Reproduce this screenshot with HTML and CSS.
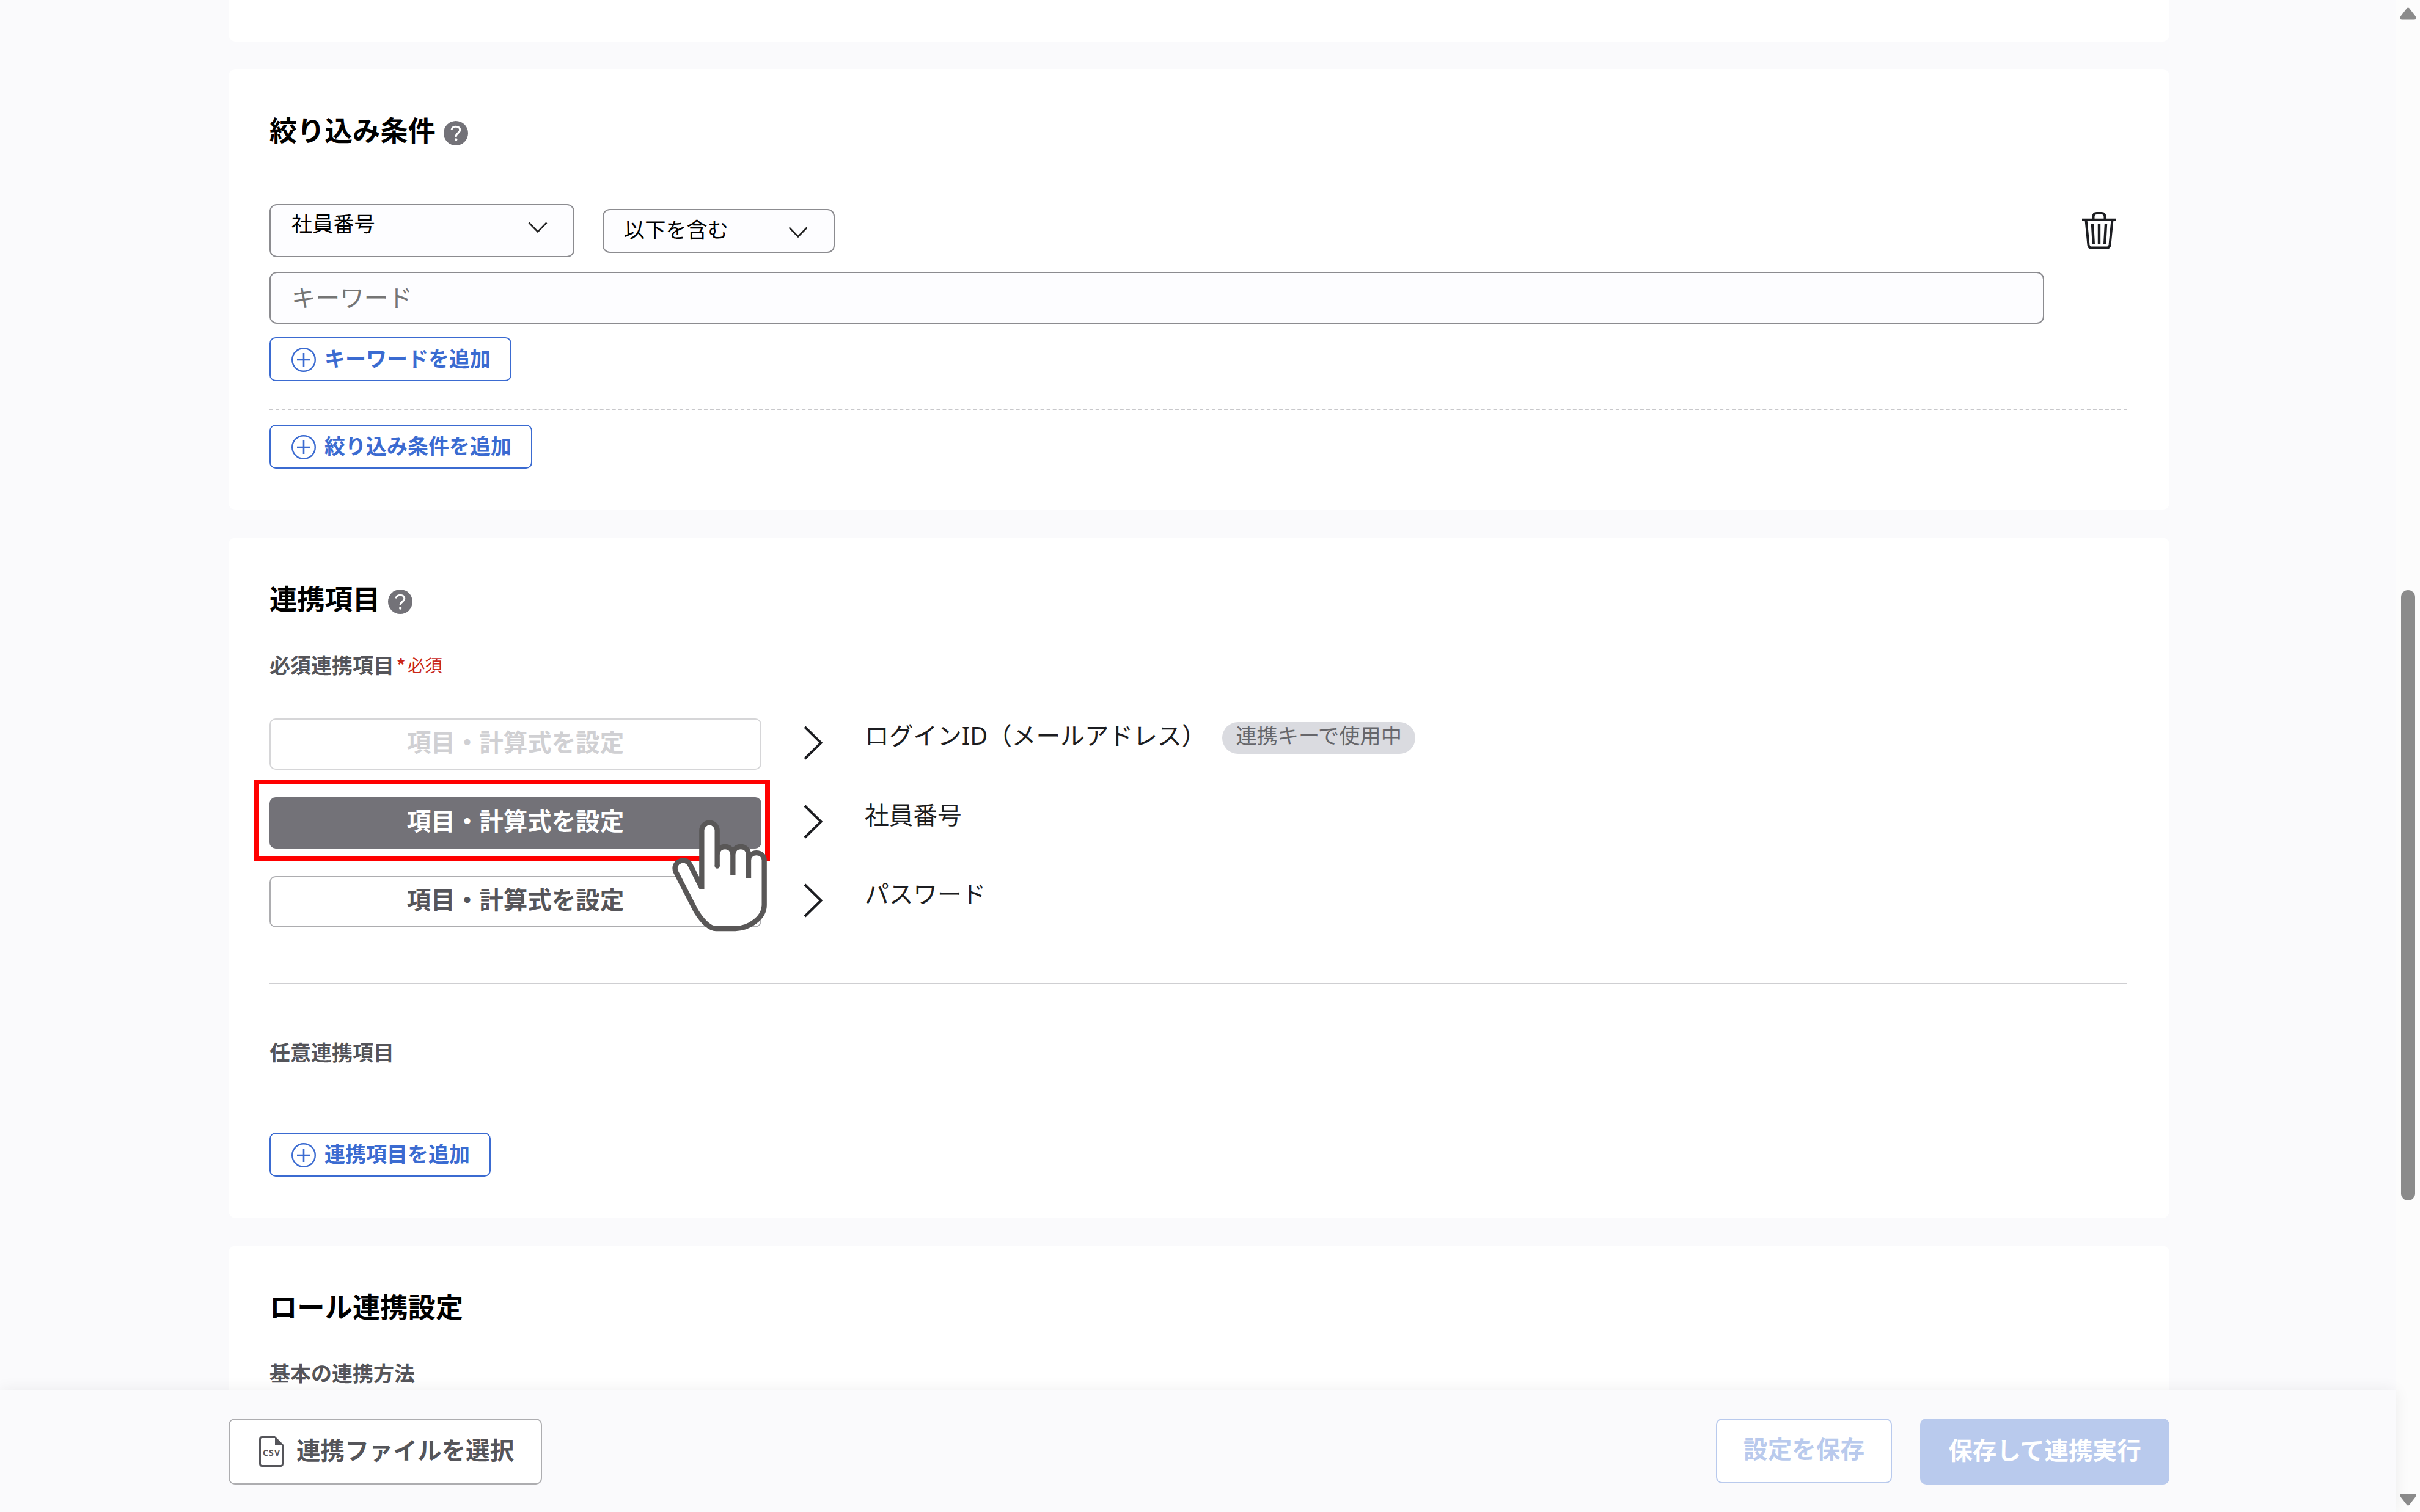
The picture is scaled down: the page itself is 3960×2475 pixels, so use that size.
FILE: index.html
```
<!DOCTYPE html>
<html lang="ja">
<head>
    <meta charset="UTF-8">
    <meta name="viewport" content="width=device-width, initial-scale=1.0">
    <title>連携設定</title>
    <link rel="stylesheet" href="styles.css">
</head>
<body>
    <svg class="defs" width="0" height="0">
        <symbol id="icon-plus" viewBox="0 0 40 40">
            <circle cx="20" cy="20" r="18.8" fill="none" stroke="currentColor" stroke-width="2.4"/>
            <path d="M20 9v22M9 20h22" fill="none" stroke="currentColor" stroke-width="2.6"/>
        </symbol>
        <symbol id="icon-help" viewBox="0 0 40 40">
            <circle cx="20" cy="20" r="20" fill="#737278"/>
            <path d="M13 14.500c.5-3.500 3.500-5.300 7-5.300 4 0 6.800 2.200 6.800 5.600 0 4.800-6.600 5.200-6.600 10.200v1" fill="none" stroke="#fff" stroke-width="3"/>
            <circle cx="20.200" cy="30.500" r="2.200" fill="#fff"/>
        </symbol>
        <symbol id="icon-down" viewBox="0 0 32 20">
            <path d="M1.500 2.500L16 17.500 30.500 2.500" fill="none" stroke="#222" stroke-width="2.600"/>
        </symbol>
        <symbol id="icon-next" viewBox="0 0 32 56">
            <path d="M2 2L28.500 28 2 54" fill="none" stroke="#1c1d21" stroke-width="4"/>
        </symbol>
    </svg>

    <div class="page">
        <div class="app">
            <main class="content">
                <section class="card card-prev"></section>

                <section class="card card-filter">
                    <h2 class="title">絞り込み条件<svg class="help"><use href="#icon-help"/></svg></h2>
                    <div class="filter-row">
                        <div class="select select-item"><span>社員番号</span><svg class="down"><use href="#icon-down"/></svg></div>
                        <div class="select select-match"><span>以下を含む</span><svg class="down"><use href="#icon-down"/></svg></div>
                        <svg class="trash" viewBox="0 0 56 61" fill="none" stroke="#1c1d21">
                            <path d="M0 12.500h56" stroke-width="3.600"/>
                            <path d="M18.500 12V8c0-4 2-6 5.500-6h8c3.500 0 5.500 2 5.500 6v4" stroke-width="4"/>
                            <path d="M6.500 13l4 41c.4 3 2 4.600 4.500 4.600h26c2.500 0 4.100-1.600 4.500-4.600l4-41" stroke-width="4"/>
                            <path d="M17 20l1.800 32M28 20v32M39 20l-1.800 32" stroke-width="4.400"/>
                        </svg>
                    </div>
                    <input class="keyword" type="text" placeholder="キーワード">
                    <button class="add"><svg class="plus"><use href="#icon-plus"/></svg>キーワードを追加</button>
                    <div class="dashed"></div>
                    <button class="add"><svg class="plus"><use href="#icon-plus"/></svg>絞り込み条件を追加</button>
                </section>

                <section class="card card-items">
                    <h2 class="title">連携項目<svg class="help"><use href="#icon-help"/></svg></h2>
                    <h3 class="label">必須連携項目<span class="required"><span class="star">*</span>必須</span></h3>
                    <div class="items">
                        <div class="item">
                            <button class="formula disabled">項目・計算式を設定</button>
                            <svg class="next"><use href="#icon-next"/></svg>
                            <span class="name">ログイン<span class="latin">ID</span>（メールアドレス）</span>
                            <span class="badge">連携キーで使用中</span>
                        </div>
                        <div class="item item-current">
                            <button class="formula active">項目・計算式を設定</button>
                            <svg class="next"><use href="#icon-next"/></svg>
                            <span class="name">社員番号</span>
                            <div class="highlight"></div>
                            <svg class="hand" viewBox="0 0 780 780">
                                <path d="M265 467V178a38 38 0 0 1 76 0V297a38.500 39 0 0 1 77 0a38.500 39 0 0 1 77 0V325a38.500 37 0 0 1 77 0V545C572 605 500 660 430 660H335C300 660 262 615 236 573L137 380C118 333 186 304 207 345Z" fill="#fff"/>
                                <path d="M265 467V178a38 38 0 0 1 76 0V353M341 297C341 245 418 245 418 297V398M418 297C418 245 495 245 495 297V412M495 325C495 276 572 276 572 325V545C572 605 500 660 430 660H335C300 660 262 615 236 573L137 380C118 333 186 304 207 345L265 460" fill="none" stroke="#595757" stroke-width="25"/>
                                <circle cx="341" cy="353" r="12.500" fill="#595757"/>
                            </svg>
                        </div>
                        <div class="item">
                            <button class="formula">項目・計算式を設定</button>
                            <svg class="next"><use href="#icon-next"/></svg>
                            <span class="name">パスワード</span>
                        </div>
                    </div>
                    <div class="divider"></div>
                    <h3 class="label label-optional">任意連携項目</h3>
                    <button class="add"><svg class="plus"><use href="#icon-plus"/></svg>連携項目を追加</button>
                </section>

                <section class="card card-role">
                    <h2 class="title">ロール連携設定</h2>
                    <h3 class="label">基本の連携方法</h3>
                </section>
            </main>

            <footer class="footer">
                <button class="file-button">
                    <svg class="csv" viewBox="0 0 40 50">
                        <path d="M26 1.500H4.500a3 3 0 0 0-3 3v41a3 3 0 0 0 3 3h31a3 3 0 0 0 3-3V14" fill="none" stroke="#55555a" stroke-width="3"/>
                        <path d="M26 0l14 14H26z" fill="#55555a"/>
                        <text x="20" y="32" text-anchor="middle" textLength="28">CSV</text>
                    </svg>
                    連携ファイルを選択
                </button>
                <div class="actions">
                    <button class="save">設定を保存</button>
                    <button class="save-run">保存して連携実行</button>
                </div>
            </footer>
        </div>

        <div class="scrollbar">
            <svg class="arrow" viewBox="0 0 27 20"><path d="M11.500 1.500q2-2 4 0l10 13q3 5-2 5h-20q-5 0-2-5z"/></svg>
            <div class="thumb"></div>
            <svg class="arrow" viewBox="0 0 27 20"><path d="M11.500 18.500q2 2 4 0l10-13q3-5-2-5h-20q-5 0-2 5z"/></svg>
        </div>
    </div>
</body>
</html>
```
FILE: styles.css
```
* {
    box-sizing: border-box;
}
body {
    margin: 0;
    background-color: #fafafc;
    font-family: "Noto Sans CJK JP", sans-serif;
    color: #1c1d21;
}
button, input {
    font-family: inherit;
    margin: 0;
}
h2, h3 {
    margin: 0;
}
svg {
    flex-shrink: 0;
}
.defs {
    position: absolute;
}
.page {
    display: flex;
    height: 2475px;
    overflow: hidden;
}
.app {
    display: flex;
    flex-direction: column;
    width: 3920px;
}
.content {
    flex: 1;
    min-height: 0;
    overflow: hidden;
    display: flex;
    flex-direction: column;
    gap: 45px;
    padding: 0 370px 0 374px;
}
.card {
    flex-shrink: 0;
    display: flex;
    flex-direction: column;
    align-items: flex-start;
    padding: 68px 69px 0 67px;
    border-radius: 12px;
    background-color: #fff;
}
.card-prev {
    height: 68px;
    border-radius: 0 0 12px 12px;
}
.card-filter {
    height: 722px;
}
.card-items {
    height: 1114px;
}
.card-role {
    height: 400px;
}
.title {
    display: flex;
    align-items: center;
    height: 60px;
    font-size: 45.3px;
    line-height: 60px;
    font-weight: 700;
    color: #000;
}
.help {
    width: 40px;
    height: 40px;
    margin: 14px 0 0 13px;
}

/* filter */
.filter-row {
    display: flex;
    align-items: center;
    align-self: stretch;
    height: 87px;
    margin-top: 93px;
}
.select {
    display: flex;
    justify-content: space-between;
    border: 2px solid #8c8c90;
    border-radius: 12px;
    background-color: #fdfdff;
    font-size: 34.2px;
    line-height: 48px;
    color: #000;
}
.select-item {
    width: 499px;
    height: 87px;
    padding: 4px 42px 0 34px;
}
.select-match {
    width: 380px;
    height: 72px;
    margin-left: 46px;
    padding: 6px 42px 0 33px;
}
.down {
    width: 32px;
    height: 20px;
    margin-top: 22px;
}
.select-match .down {
    margin-top: 20px;
}
.trash {
    width: 56px;
    height: 61px;
    margin: 0 18px 0 auto;
}
.keyword {
    width: 2904px;
    height: 85px;
    margin-top: 24px;
    padding: 0 34px 6px;
    border: 2px solid #8c8c90;
    border-radius: 12px;
    background-color: #fdfdff;
    font-size: 39.6px;
}
.keyword::placeholder {
    color: #757575;
}
.add {
    display: flex;
    align-items: center;
    height: 72px;
    padding: 0 32px 5px 34px;
    border: 2px solid #3b6bd1;
    border-radius: 10px;
    background-color: #fff;
    color: #3b6bd1;
    font-size: 34px;
    line-height: 60px;
    font-weight: 700;
}
.plus {
    width: 40px;
    height: 40px;
    margin: 6px 14px 0 0;
}
.keyword + .add {
    margin-top: 22px;
}
.dashed {
    align-self: stretch;
    margin: 45px 0 24px;
    border-top: 2px dashed #c8c8cb;
}

/* items */
.label {
    display: flex;
    height: 48px;
    margin-top: 56px;
    font-size: 34px;
    line-height: 48px;
    font-weight: 700;
    color: #55555a;
}
.required {
    margin-left: 4px;
    font-size: 28.4px;
    font-weight: 400;
    color: #c9261a;
}
.star {
    display: inline-block;
    width: 18px;
    font-weight: 700;
}
.items {
    display: flex;
    flex-direction: column;
    gap: 45px;
    margin-top: 64px;
}
.item {
    position: relative;
    display: flex;
    align-items: center;
    height: 84px;
}
.item-current {
    z-index: 1;
}
.formula {
    width: 805px;
    height: 84px;
    padding: 0 0 10px;
    border: 2px solid #adadb0;
    border-radius: 10px;
    background-color: #fff;
    font-size: 39.5px;
    line-height: 60px;
    font-weight: 700;
    color: #55555a;
}
.formula.disabled {
    border-color: #d6d6d8;
    color: #d0d0d3;
}
.formula.active {
    border-color: #737278;
    background-color: #737278;
    color: #fff;
}
.next {
    width: 32px;
    height: 56px;
    margin: 0 0 4px 69px;
}
.name {
    margin: 0 0 30px 68px;
    font-size: 39.7px;
    line-height: 56px;
}
.latin {
    font-family: "Noto Sans", sans-serif;
}
.badge {
    height: 52px;
    margin: 0 0 21px 27px;
    padding: 0 22px;
    border-radius: 26px;
    background-color: #dadbe0;
    font-size: 34.2px;
    line-height: 40px;
    color: #66666a;
}
.highlight {
    position: absolute;
    left: -25px;
    top: -29px;
    width: 844px;
    height: 134px;
    border: 8px solid #f00;
}
.hand {
    position: absolute;
    left: 619px;
    top: -5px;
    width: 260px;
    height: 260px;
}
.divider {
    align-self: stretch;
    margin-top: 91px;
    border-top: 2px solid #cfcfd2;
}
.label-optional {
    margin: 87px 0 108px;
}

/* footer */
.footer {
    position: relative;
    display: flex;
    justify-content: space-between;
    flex-shrink: 0;
    height: 199px;
    padding: 46px 370px 0 374px;
    background-color: #fafafc;
    box-shadow: 0 0 25px rgba(0, 0, 0, 0.07);
}
.file-button, .save, .save-run {
    display: flex;
    align-items: center;
    height: 108px;
    border: 2px solid #adadb0;
    border-radius: 10px;
    background-color: #fff;
    font-size: 39.6px;
    line-height: 60px;
    font-weight: 700;
    color: #55555a;
    padding: 0 43px 8px;
}
.file-button {
    width: 513px;
    padding-left: 48px;
}
.csv {
    width: 40px;
    height: 50px;
    margin: 7px 21px 0 0;
}
.csv text {
    font-family: "Noto Sans", sans-serif;
    font-size: 14px;
    font-weight: 700;
    fill: #55555a;
}
.actions {
    display: flex;
    gap: 46px;
}
.save {
    height: 106px;
    border-color: #b9caed;
    color: #b9caed;
    padding-bottom: 11px;
}
.save-run {
    width: 408px;
    justify-content: center;
    border-color: #b9caed;
    background-color: #b9caed;
    color: #fff;
}

.scrollbar {
    display: flex;
    flex-direction: column;
    align-items: center;
    justify-content: space-between;
    width: 40px;
    padding: 12px 0 10px;
    background-color: #fcfcfc;
}
.arrow {
    width: 27px;
    height: 20px;
    fill: #8b8b8b;
}
.thumb {
    width: 23px;
    height: 999px;
    margin-top: 453px;
    border-radius: 12px;
    background-color: #8b8b8b;
}
```
